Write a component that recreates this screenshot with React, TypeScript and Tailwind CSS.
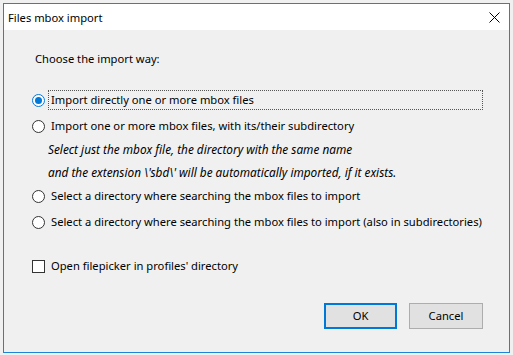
import React from "react";

function Radio({ checked }: { checked?: boolean }) {
  return (
    <svg width="13" height="13" viewBox="0 0 13 13" className="shrink-0">
      {checked ? (
        <>
          <circle cx="6.5" cy="6.5" r="6" fill="#ffffff" stroke="#0078d7" strokeWidth="1" />
          <circle cx="6.5" cy="6.5" r="3.5" fill="#0078d7" />
        </>
      ) : (
        <circle cx="6.5" cy="6.5" r="6" fill="#ffffff" stroke="#333333" strokeWidth="1" />
      )}
    </svg>
  );
}

export default function App() {
  return (
    <div
      className="w-[513px] h-[355px] bg-[#f0f0f0] pt-[3px] pl-[3px] text-[11.2px] text-black whitespace-nowrap"
      style={{ fontFamily: '"Noto Sans", "Open Sans", sans-serif' }}
    >
      <div className="w-[507px] h-[350px] border border-[#1c85d8] bg-[#f0f0f0] flex flex-col">
        {/* title bar */}
        <div className="h-[26px] bg-white flex items-center justify-between pl-[4px] pr-[9px]">
          <span className="leading-[16px] mt-[1px]">Files mbox import</span>
          <svg width="11" height="11" viewBox="0 0 11 11" className="mt-[1px]">
            <path d="M0.5 0.5 L10.5 10.5 M10.5 0.5 L0.5 10.5" stroke="#000" strokeWidth="1" />
          </svg>
        </div>
        {/* body */}
        <div className="flex flex-col pl-[28px] pr-[26px]">
          <div className="mt-[21px] h-[16px] leading-[16px] pl-[3px]">Choose the import way:</div>

          <div className="mt-[23px] h-[20px] flex items-center">
            <Radio checked />
            <div className="ml-[3px] w-[436px] h-[20px] border border-dotted border-[#555] flex items-center pl-[2px]">
              Import directly one or more mbox files
            </div>
          </div>

          <div className="mt-[6px] h-[20px] flex items-center">
            <Radio />
            <span className="ml-[6px]">Import one or more mbox files, with its/their subdirectory</span>
          </div>

          <div className="mt-[5px] h-[16px] leading-[16px] pl-[16px] italic text-[11.8px]">
            Select just the mbox file, the directory with the same name
          </div>
          <div className="mt-[7px] h-[16px] leading-[16px] pl-[16px] italic text-[11.8px]">
            and the extension \'sbd\' will be automatically imported, if it exists.
          </div>

          <div className="mt-[6px] h-[20px] flex items-center">
            <Radio />
            <span className="ml-[6px]">Select a directory where searching the mbox files to import</span>
          </div>

          <div className="mt-[6px] h-[20px] flex items-center">
            <Radio />
            <span className="ml-[6px]">
              Select a directory where searching the mbox files to import (also in subdirectories)
            </span>
          </div>

          <div className="mt-[24px] h-[20px] flex items-center">
            <div className="w-[13px] h-[13px] border border-[#333] bg-white shrink-0" />
            <span className="ml-[6px]">Open filepicker in profiles' directory</span>
          </div>

          <div className="mt-[27px] flex justify-end gap-[12px]">
            <button className="w-[73px] h-[26px] border-2 border-[#0078d7] bg-[#e1e1e1] flex items-center justify-center">
              OK
            </button>
            <button className="w-[74px] h-[26px] border border-[#adadad] bg-[#e1e1e1] flex items-center justify-center">
              Cancel
            </button>
          </div>
        </div>
      </div>
    </div>
  );
}
